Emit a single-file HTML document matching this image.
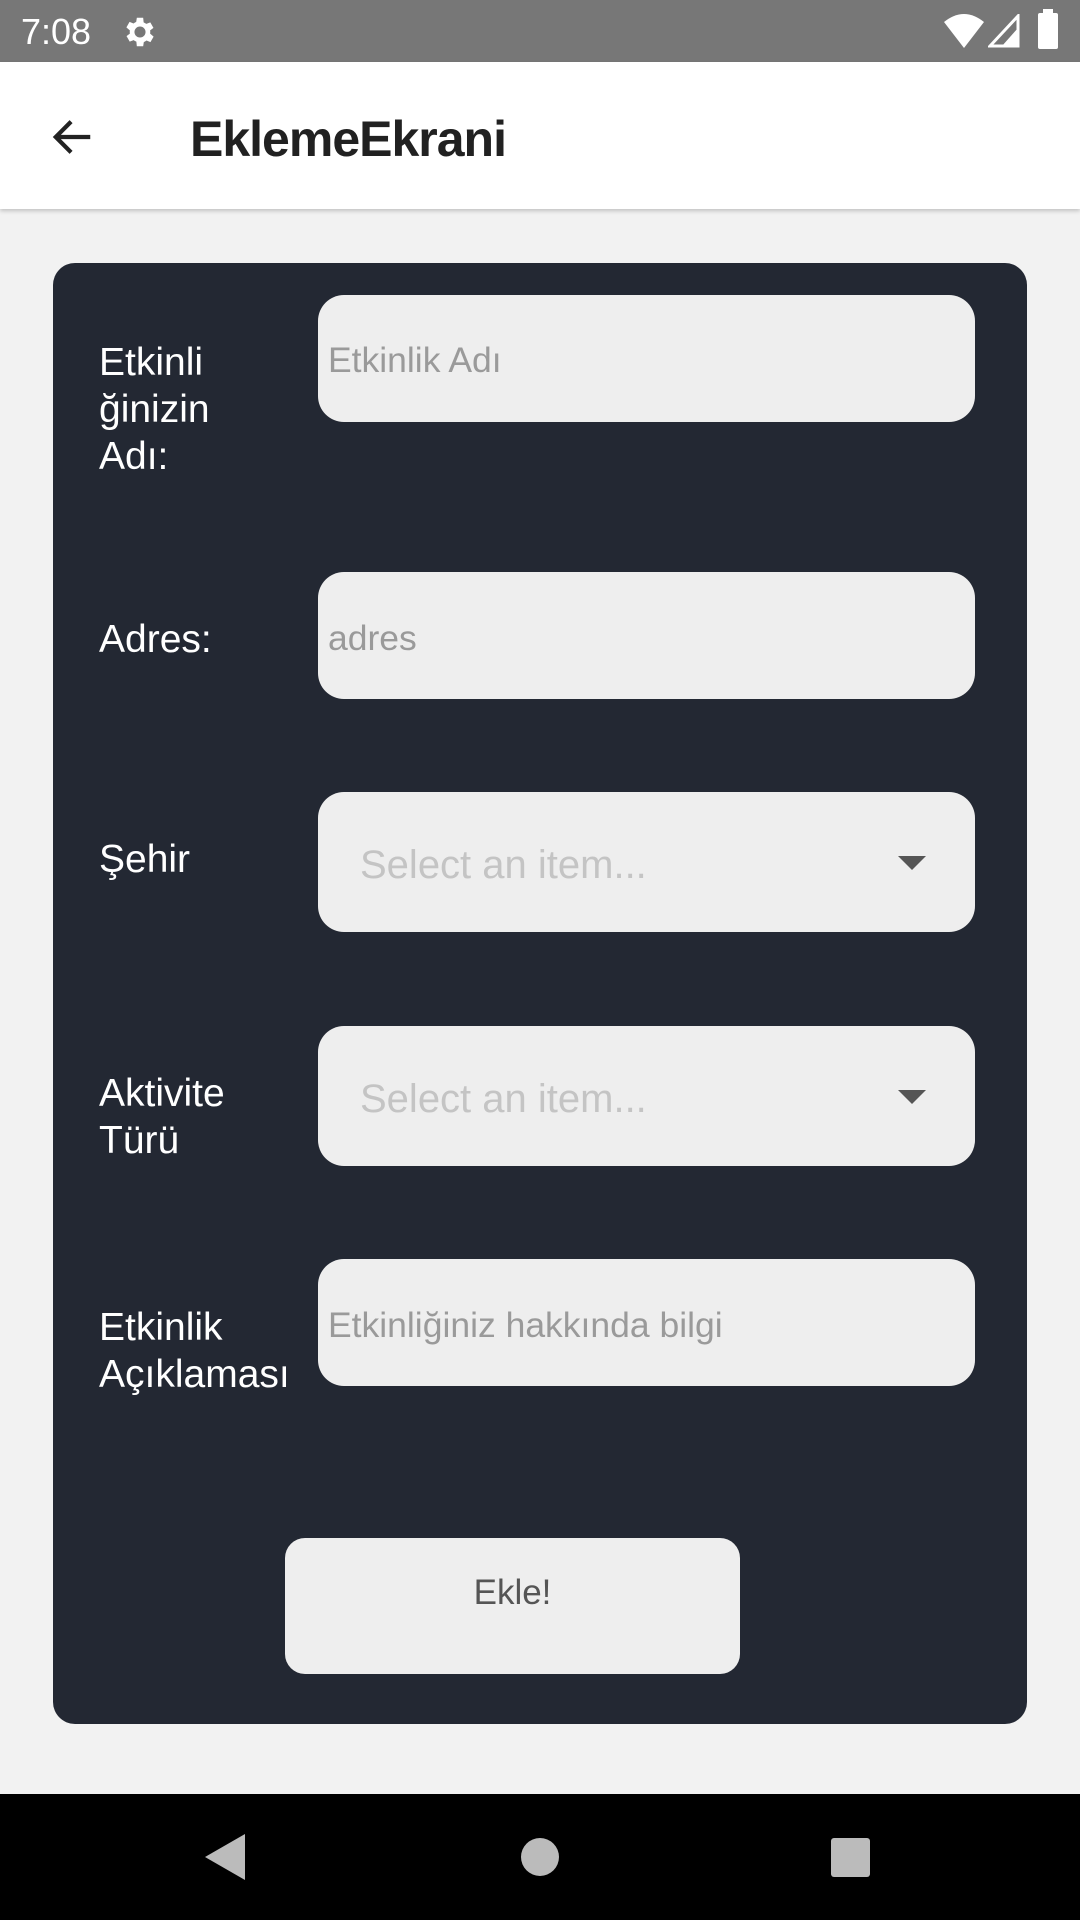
<!DOCTYPE html>
<html><head><meta charset="utf-8"><style>
*{margin:0;padding:0;box-sizing:border-box}
body{width:1080px;height:1920px;background:#f2f2f2;font-family:"Liberation Sans",sans-serif;position:relative;overflow:hidden}
.a{position:absolute}
.sb{left:0;top:0;width:1080px;height:62px;background:#777}
.ab{left:0;top:62px;width:1080px;height:147px;background:#fff;box-shadow:0 2px 4px rgba(0,0,0,.2)}
.card{left:53px;top:263px;width:974px;height:1461px;background:#232833;border-radius:22px}
.f{background:#eeeeee;border-radius:26px;left:318px;width:657px}
.lbl{color:#fff;font-size:39px;left:99px;line-height:47px}
.hint{color:#9a9a9a;font-size:35.5px;left:328px}
.sel{color:#c4c4c4;font-size:40px;left:360px}
.nav{left:0;top:1794px;width:1080px;height:126px;background:#000}
</style></head><body>
<div class="a sb"></div>
<div class="a" style="left:21px;top:11px;color:#fff;font-size:36px">7:08</div>
<svg class="a" style="left:121px;top:13px" width="38" height="38" viewBox="0 0 24 24"><path fill="#fff" d="M19.4 13a7.5 7.5 0 0 0 0-2l2.1-1.6-2-3.5-2.5 1a7.6 7.6 0 0 0-1.7-1L15 3h-4l-.4 2.6a7.6 7.6 0 0 0-1.7 1l-2.5-1-2 3.5L6.6 11a7.5 7.5 0 0 0 0 2l-2.1 1.6 2 3.5 2.5-1c.5.4 1.1.7 1.7 1L11 21h4l.4-2.6c.6-.3 1.2-.6 1.7-1l2.5 1 2-3.5zM13 15.5A3.5 3.5 0 1 1 13 8.5a3.5 3.5 0 0 1 0 7z" transform="translate(-1 0)"/></svg>
<svg class="a" style="left:944px;top:14px" width="40" height="34" viewBox="0 0 40 34"><path fill="#fff" d="M0 8Q20-8 40 8L20 34z"/></svg>
<svg class="a" style="left:988px;top:14px" width="32" height="34" viewBox="0 0 32 34"><path fill="none" stroke="#fff" stroke-width="3" d="M30 2V32H2z"/><path fill="#fff" d="M30 14V32H14z"/></svg>
<div class="a" style="left:1038px;top:13px;width:20px;height:36px;background:#fff;border-radius:2px"></div>
<div class="a" style="left:1043px;top:9px;width:10px;height:5px;background:#fff"></div>
<div class="a ab"></div>
<svg class="a" style="left:50px;top:114px" width="46" height="46" viewBox="0 0 24 24"><path fill="none" stroke="#222" stroke-width="2.2" d="M21 12H4M11 4l-8 8 8 8"/></svg>
<div class="a" style="left:190px;top:110px;color:#212121;font-size:50px;font-weight:bold;letter-spacing:-1px">EklemeEkrani</div>
<div class="a card"></div>
<div class="a f" style="top:295px;height:127px"></div>
<div class="a hint" style="top:340px">Etkinlik Adı</div>
<div class="a lbl" style="top:339px">Etkinli<br>ğinizin<br>Adı:</div>
<div class="a f" style="top:572px;height:127px"></div>
<div class="a hint" style="top:618px">adres</div>
<div class="a lbl" style="top:616px">Adres:</div>
<div class="a f" style="top:792px;height:140px"></div>
<div class="a sel" style="top:843px">Select an item...</div>
<svg class="a" style="left:898px;top:856px" width="28" height="14"><path d="M0 0H28L14 14z" fill="#555"/></svg>
<div class="a lbl" style="top:836px">Şehir</div>
<div class="a f" style="top:1026px;height:140px"></div>
<div class="a sel" style="top:1077px">Select an item...</div>
<svg class="a" style="left:898px;top:1090px" width="28" height="14"><path d="M0 0H28L14 14z" fill="#555"/></svg>
<div class="a lbl" style="top:1070px">Aktivite<br>Türü</div>
<div class="a f" style="top:1259px;height:127px"></div>
<div class="a hint" style="top:1305px">Etkinliğiniz hakkında bilgi</div>
<div class="a lbl" style="top:1304px">Etkinlik<br>Açıklaması</div>
<div class="a" style="left:285px;top:1538px;width:455px;height:136px;background:#eeeeee;border-radius:20px"></div>
<div class="a" style="left:285px;top:1573px;width:455px;text-align:center;color:#555;font-size:35px">Ekle!</div>
<div class="a nav"></div>
<svg class="a" style="left:205px;top:1834px" width="40" height="46"><path d="M40 0V46L0 23z" fill="#bbb"/></svg>
<div class="a" style="left:521px;top:1838px;width:38px;height:38px;border-radius:50%;background:#bbb"></div>
<div class="a" style="left:831px;top:1838px;width:39px;height:39px;border-radius:3px;background:#bbb"></div>
</body></html>
